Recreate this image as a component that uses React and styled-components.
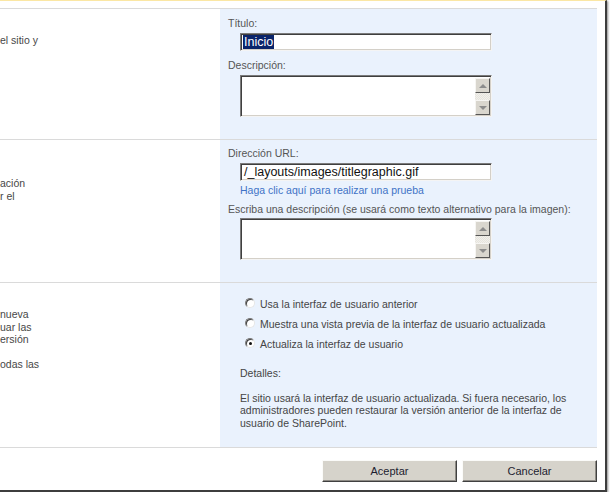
import React from 'react';
import styled, { createGlobalStyle, css } from 'styled-components';

const Global = createGlobalStyle`
  html, body {
    margin: 0;
    padding: 0;
    background: #fff;
    overflow: hidden;
  }
  body {
    font-family: "Liberation Sans", Arial, sans-serif;
  }
`;

const Frame = styled.div`
  width: 607px;
  height: 492px;
  box-sizing: border-box;
  border-top: 1px solid #fbe7a4;
  border-right: 2px solid #3d3d3d;
  border-bottom: 2px solid #3d3d3d;
  box-shadow: 1px 1px 2px rgba(0, 0, 0, 0.45);
  padding: 7px 8px 0 0;
  display: flex;
  flex-direction: column;
  background: #fff;
`;

const Sections = styled.div`
  border-top: 1px solid #dadada;
`;

const Section = styled.div`
  display: grid;
  grid-template-columns: 220px 1fr;
  border-bottom: 1px solid #dadada;
`;

const Side = styled.div`
  padding-top: ${p => p.top}px;
  font-size: 10.5px;
  line-height: 12.5px;
  color: #474747;
  white-space: pre;
  overflow: hidden;
`;

const Panel = styled.div`
  background: #eaf2fd;
  padding: ${p => p.top}px 0 ${p => p.bottom}px 8px;
  display: flex;
  flex-direction: column;
`;

const Label = styled.div`
  font-size: 10.5px;
  line-height: 13px;
  color: #555;
  margin-top: ${p => p.gap || 0}px;
  white-space: nowrap;
`;

const inset = css`
  box-sizing: border-box;
  background: #fff;
  border-style: solid;
  border-width: 1px;
  border-color: #7b7b7b #f4f4f4 #f4f4f4 #7b7b7b;
  box-shadow: inset 1px 1px 0 #3f3f3f, inset -1px -1px 0 #d4d0c8;
`;

const Field = styled.div`
  ${inset};
  margin: ${p => p.gap || 0}px 0 0 12px;
  width: 252px;
  height: 18px;
  padding-left: 3px;
  display: flex;
  align-items: center;
  font-size: 12.5px;
  color: #111;
  white-space: nowrap;
`;

const Selected = styled.span`
  background: #0a246a;
  color: #fff;
  line-height: 14px;
  padding: 0 1px;
  margin-left: -1px;
`;

const TextBox = styled.div`
  ${inset};
  margin: ${p => p.gap || 0}px 0 0 12px;
  width: 252px;
  height: 42px;
  padding: 2px 1px 1px 2px;
  display: flex;
  justify-content: flex-end;
`;

const Scroll = styled.div`
  width: 15px;
  display: flex;
  flex-direction: column;
  justify-content: space-between;
  background: repeating-conic-gradient(#f1f0ec 0 25%, #e6e4dd 0 50%) 0 0 / 2px 2px;
`;

const ArrowButton = styled.div`
  height: 15px;
  box-sizing: border-box;
  background: #d9d6ce;
  border: 1px solid;
  border-color: #f6f5f2 #555 #555 #f6f5f2;
  display: flex;
  align-items: center;
  justify-content: center;

  &::before {
    content: '';
    border-left: 4px solid transparent;
    border-right: 4px solid transparent;
    ${p => p.down
      ? css`border-top: 4px solid #8c8c8c;`
      : css`border-bottom: 4px solid #8c8c8c;`}
  }
`;

const Link = styled.div`
  margin: 3px 0 0 12px;
  font-size: 10.5px;
  line-height: 13px;
  color: #3f72c6;
  white-space: nowrap;
`;

const RadioList = styled.div`
  padding-left: 17px;
  display: flex;
  flex-direction: column;
  gap: 7px;
`;

const RadioRow = styled.label`
  display: flex;
  align-items: center;
  gap: 5px;
  font-size: 10.5px;
  line-height: 13px;
  color: #454545;
  white-space: nowrap;
`;

const Radio = styled.span`
  width: 10px;
  height: 10px;
  box-sizing: border-box;
  border-radius: 50%;
  background: #fff;
  border: 1px solid;
  border-color: #7a7a7a #e6e6e6 #e6e6e6 #7a7a7a;
  box-shadow: inset 1px 1px 0 #404040;
  display: flex;
  align-items: center;
  justify-content: center;
  margin-top: -3px;

  &::after {
    content: '';
    width: 3px;
    height: 3px;
    border-radius: 50%;
    background: ${p => (p.checked ? '#111' : 'transparent')};
  }
`;

const Details = styled.div`
  margin-left: 12px;
  margin-top: ${p => p.gap || 0}px;
  font-size: 10.5px;
  line-height: 12.5px;
  color: #454545;
  white-space: nowrap;
`;

const ButtonBar = styled.div`
  display: flex;
  justify-content: flex-end;
  gap: 5px;
  padding-top: 12px;
`;

const Button = styled.button`
  width: 135px;
  height: 22px;
  box-sizing: border-box;
  background: #d6d3cb;
  border: 1px solid;
  border-color: #fbfbf9 #404040 #404040 #fbfbf9;
  box-shadow: inset -1px -1px 0 #8d8a84;
  font-family: "Liberation Sans", Arial, sans-serif;
  font-size: 11px;
  color: #1d1d30;
  padding: 0;
`;

const Textarea = ({ gap }) => (
  <TextBox gap={gap}>
    <Scroll>
      <ArrowButton />
      <ArrowButton down />
    </Scroll>
  </TextBox>
);

export default function App() {
  return (
    <>
      <Global />
      <Frame>
        <Sections>
          <Section>
            <Side top={25}>{'el sitio y'}</Side>
            <Panel top={8} bottom={22}>
              <Label>Título:</Label>
              <Field gap={3}>
                <Selected>Inicio</Selected>
              </Field>
              <Label gap={8}>Descripción:</Label>
              <Textarea gap={3} />
            </Panel>
          </Section>

          <Section>
            <Side top={37}>{'ación\nr el'}</Side>
            <Panel top={7} bottom={22}>
              <Label>Dirección URL:</Label>
              <Field gap={3}>/_layouts/images/titlegraphic.gif</Field>
              <Link>Haga clic aquí para realizar una prueba</Link>
              <Label gap={6}>Escriba una descripción (se usará como texto alternativo para la imagen):</Label>
              <Textarea gap={2} />
            </Panel>
          </Section>

          <Section>
            <Side top={25}>{'nueva\nuar las\nersión\n\nodas las'}</Side>
            <Panel top={15} bottom={18}>
              <RadioList>
                <RadioRow><Radio />Usa la interfaz de usuario anterior</RadioRow>
                <RadioRow><Radio />Muestra una vista previa de la interfaz de usuario actualizada</RadioRow>
                <RadioRow><Radio checked />Actualiza la interfaz de usuario</RadioRow>
              </RadioList>
              <Details gap={16}>Detalles:</Details>
              <Details gap={12}>
                El sitio usará la interfaz de usuario actualizada. Si fuera necesario, los<br />
                administradores pueden restaurar la versión anterior de la interfaz de<br />
                usuario de SharePoint.
              </Details>
            </Panel>
          </Section>
        </Sections>

        <ButtonBar>
          <Button>Aceptar</Button>
          <Button>Cancelar</Button>
        </ButtonBar>
      </Frame>
    </>
  );
}
